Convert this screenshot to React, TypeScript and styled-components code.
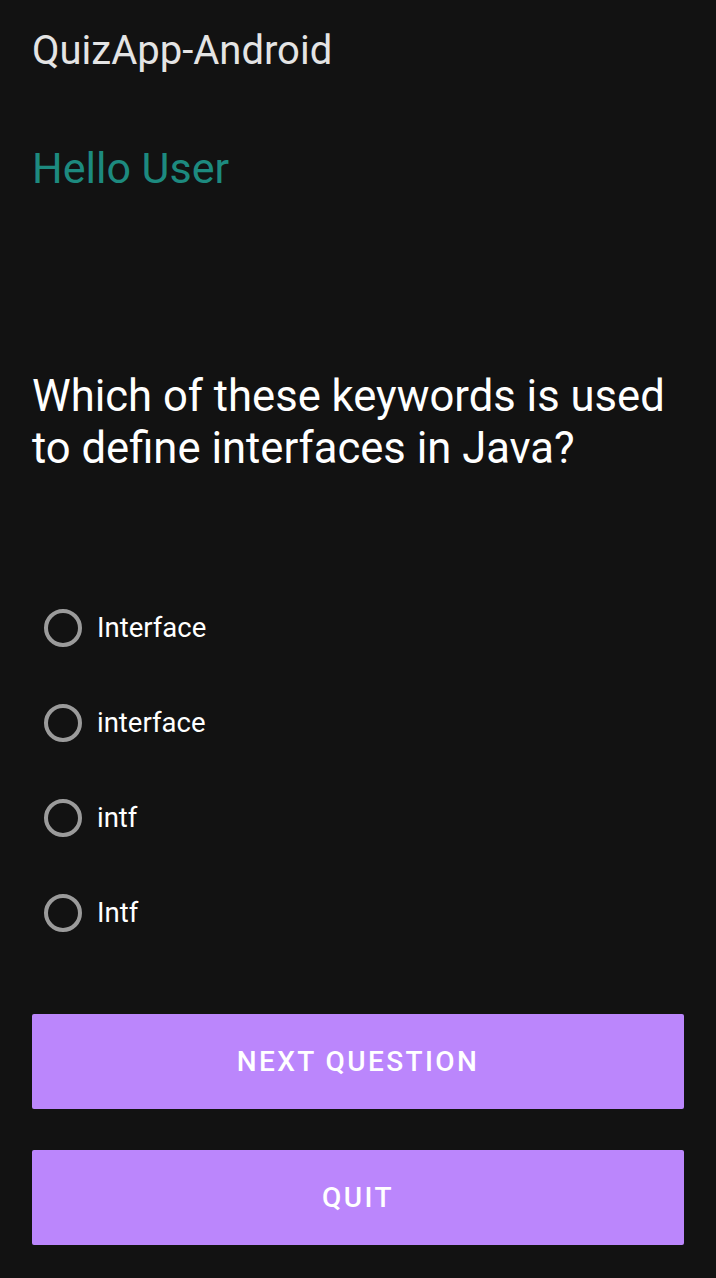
import React, { useState } from 'react'
import styled, { createGlobalStyle } from 'styled-components'

const GlobalStyle = createGlobalStyle`
  html, body {
    margin: 0;
    padding: 0;
    background: #121212;
  }
  body {
    font-family: Roboto, "Liberation Sans", sans-serif;
  }
`

const Screen = styled.div`
  width: 716px;
  height: 1278px;
  box-sizing: border-box;
  padding: 0 32px;
  background: #121212;
  display: flex;
  flex-direction: column;
`

const AppTitle = styled.div`
  margin-top: 27px;
  height: 48px;
  line-height: 48px;
  font-size: 40px;
  color: #e4e4e4;
`

const Greeting = styled.div`
  margin-top: 67px;
  line-height: 52px;
  font-size: 43px;
  color: #1d8a7f;
`

const Question = styled.div`
  margin-top: 177px;
  font-size: 43.6px;
  line-height: 52px;
  color: #ffffff;
`

const Options = styled.div`
  margin-top: 105px;
  display: flex;
  flex-direction: column;
`

const OptionRow = styled.label`
  height: 95px;
  display: flex;
  align-items: center;
  gap: 15px;
  padding-left: 12px;
  cursor: pointer;
`

const RadioCircle = styled.span<{ checked: boolean }>`
  width: 38px;
  height: 38px;
  flex-shrink: 0;
  box-sizing: border-box;
  border-radius: 50%;
  border: 4px solid ${(p) => (p.checked ? '#bb86fc' : '#9b9b9b')};
  display: flex;
  align-items: center;
  justify-content: center;

  &::after {
    content: '';
    width: 16px;
    height: 16px;
    border-radius: 50%;
    background: #bb86fc;
    display: ${(p) => (p.checked ? 'block' : 'none')};
  }
`

const OptionText = styled.span`
  font-size: 27.5px;
  color: #ffffff;
`

const Buttons = styled.div`
  margin-top: 54px;
  display: flex;
  flex-direction: column;
  gap: 41px;
`

const ActionButton = styled.button`
  height: 95px;
  width: 100%;
  border: none;
  border-radius: 2px;
  background: #bb86fc;
  color: #ffffff;
  font-family: Roboto, "Liberation Sans", sans-serif;
  font-weight: 500;
  font-size: 28px;
  letter-spacing: 2.4px;
  text-transform: uppercase;
  cursor: pointer;
`

const options = ['Interface', 'interface', 'intf', 'Intf']

const App = () => {
  const [selected, setSelected] = useState<number | null>(null)

  return (
    <>
      <GlobalStyle />
      <Screen>
        <AppTitle>QuizApp-Android</AppTitle>
        <Greeting>Hello User</Greeting>
        <Question>
          Which of these keywords is used to define interfaces in Java?
        </Question>
        <Options>
          {options.map((option, index) => (
            <OptionRow key={option} onClick={() => setSelected(index)}>
              <RadioCircle checked={selected === index} />
              <OptionText>{option}</OptionText>
            </OptionRow>
          ))}
        </Options>
        <Buttons>
          <ActionButton>Next Question</ActionButton>
          <ActionButton>Quit</ActionButton>
        </Buttons>
      </Screen>
    </>
  )
}

export default App
